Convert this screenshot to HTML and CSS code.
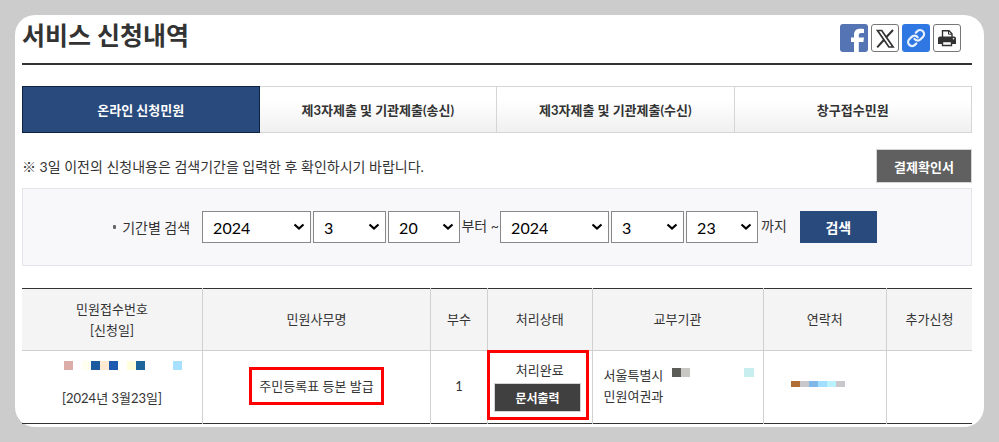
FILE: index.html
```html
<!DOCTYPE html>
<html lang="ko">
<head>
    <meta charset="UTF-8">
    <meta name="viewport" content="width=device-width, initial-scale=1.0">
    <title>서비스 신청내역</title>
    <link rel="stylesheet" href="styles.css">
</head>
<body>
    <main class="container">
        <header class="page-header">
            <h1>서비스 신청내역</h1>
            <div class="share">
                <a class="share-item facebook" href="#" aria-label="페이스북">
                    <svg viewBox="0 0 28 28" width="28" height="28"><path fill="#fff" d="M14 28V18h-3v-4.500h3v-2.500c0-4.300 2.300-6.300 6-6.300 1.500 0 3 .1 4 .3v4h-2.500c-2 0-2.700.7-2.700 2.200v2.300H24l-.6 4.500h-4.600v10z"/></svg>
                </a>
                <a class="share-item outlined" href="#" aria-label="X">
                    <svg viewBox="0 0 28 28" width="28" height="28"><path fill="none" stroke="#333" stroke-width="1.700" d="M6.500 6.500h4.200l11.400 16.500h-4.200z"/><path stroke="#333" stroke-width="2" d="M22 6l-7 7.500M12.800 16l-6.600 7.300"/></svg>
                </a>
                <a class="share-item link" href="#" aria-label="링크 복사">
                    <svg viewBox="0 0 28 28" width="28" height="28"><g transform="translate(4.500 4.500) scale(.8)" fill="none" stroke="#e8f2ff" stroke-width="2.800" stroke-linecap="round" stroke-linejoin="round"><path d="M10 13a5 5 0 0 0 7.540.540l3-3a5 5 0 0 0-7.070-7.070l-1.720 1.710"/><path d="M14 11a5 5 0 0 0-7.540-.540l-3 3a5 5 0 0 0 7.070 7.070l1.710-1.710"/></g></svg>
                </a>
                <button class="share-item outlined" type="button" aria-label="인쇄">
                    <svg viewBox="0 0 28 28" width="28" height="28"><path fill="#fff" stroke="#333" stroke-width="1.400" d="M9.500 14V6.700h6.500l3 3V14"/><path fill="none" stroke="#333" d="M15.500 6.700v3.500H19"/><path fill="#333" d="M7 12.500h14a2 2 0 0 1 2 2V20H5v-5.500a2 2 0 0 1 2-2z"/><path fill="#fff" stroke="#333" stroke-width="1.400" d="M9.500 17.500h9v4h-9z"/><circle cx="20.500" cy="14.700" r=".8" fill="#fff"/></svg>
                </button>
            </div>
        </header>

        <nav class="tabs">
            <a class="tab active" href="#">온라인 신청민원</a>
            <a class="tab" href="#">제3자제출 및 기관제출(송신)</a>
            <a class="tab" href="#">제3자제출 및 기관제출(수신)</a>
            <a class="tab" href="#">창구접수민원</a>
        </nav>

        <div class="notice">
            <p>※ 3일 이전의 신청내용은 검색기간을 입력한 후 확인하시기 바랍니다.</p>
            <button class="btn-receipt" type="button">결제확인서</button>
        </div>

        <form class="search">
            <label class="search-label" for="fromYear">기간별 검색</label>
            <div class="date-group">
                <select class="year" id="fromYear"><option>2024</option></select>
                <select id="fromMonth" aria-label="시작 월"><option>3</option></select>
                <select class="day" id="fromDay" aria-label="시작 일"><option>20</option></select>
            </div>
            <span class="from-text">부터 ~</span>
            <div class="date-group">
                <select class="year" id="toYear" aria-label="종료 연도"><option>2024</option></select>
                <select id="toMonth" aria-label="종료 월"><option>3</option></select>
                <select class="day" id="toDay" aria-label="종료 일"><option>23</option></select>
            </div>
            <span class="to-text">까지</span>
            <button class="btn-search" type="button">검색</button>
        </form>

        <table class="list">
            <colgroup>
                <col class="col-number">
                <col class="col-name">
                <col class="col-count">
                <col class="col-status">
                <col class="col-office">
                <col class="col-contact">
                <col class="col-extra">
            </colgroup>
            <thead>
                <tr>
                    <th>민원접수번호<br>[신청일]</th>
                    <th>민원사무명</th>
                    <th>부수</th>
                    <th>처리상태</th>
                    <th>교부기관</th>
                    <th>연락처</th>
                    <th>추가신청</th>
                </tr>
            </thead>
            <tbody>
                <tr>
                    <td class="number">
                        <svg class="mosaic" width="118" height="9" shape-rendering="crispEdges" aria-hidden="true">
                            <rect width="9" height="9" fill="#dbaca8"/>
                            <rect x="18" width="9" height="9" fill="#fffff0"/>
                            <rect x="27" width="9" height="9" fill="#1e5b9e"/>
                            <rect x="36" width="9" height="9" fill="#feebd2"/>
                            <rect x="45" width="9" height="9" fill="#1e5ab0"/>
                            <rect x="63" width="9" height="9" fill="#ffffdc"/>
                            <rect x="72" width="9" height="9" fill="#1e669a"/>
                            <rect x="109" width="9" height="9" fill="#a8e0ff"/>
                        </svg>
                        [2024년 3월23일]
                    </td>
                    <td><a class="doc-name" href="#">주민등록표 등본 발급</a></td>
                    <td>1</td>
                    <td class="status">
                        처리완료
                        <button class="btn-print" type="button">문서출력</button>
                    </td>
                    <td class="office">
                        <div class="office-name">
                            서울특별시
                            <svg class="mosaic" width="82" height="9" shape-rendering="crispEdges" aria-hidden="true">
                                <rect width="9" height="9" fill="#5b5c58"/>
                                <rect x="9" width="9" height="9" fill="#c9c7c4"/>
                                <rect x="72" width="10" height="9" fill="#c8eef0"/>
                            </svg>
                        </div>
                        민원여권과
                    </td>
                    <td>
                        <svg class="mosaic phone" width="54" height="6" shape-rendering="crispEdges" aria-hidden="true">
                            <rect width="9" height="6" fill="#b06d34"/>
                            <rect x="9" width="9" height="6" fill="#c9c7cb"/>
                            <rect x="18" width="9" height="6" fill="#82b8e8"/>
                            <rect x="27" width="9" height="6" fill="#a0dfff"/>
                            <rect x="36" width="9" height="6" fill="#baf2ff"/>
                            <rect x="45" width="9" height="6" fill="#c9c7cb"/>
                        </svg>
                    </td>
                    <td></td>
                </tr>
            </tbody>
        </table>
    </main>
</body>
</html>
```
FILE: styles.css
```css
* {
    box-sizing: border-box;
}
body {
    margin: 0;
    padding: 15px;
    background-color: #ccc;
    color: #333;
    font-family: Lato, 'Noto Sans CJK KR', sans-serif;
    font-size: 13px;
    line-height: 21px;
}
a {
    color: inherit;
    text-decoration: none;
}
button {
    font-family: inherit;
    font-weight: bold;
    color: #fff;
    padding: 0;
    cursor: pointer;
}
.container {
    background-color: #fff;
    border-radius: 20px;
    padding: 0 12px 3px 7px;
}
.page-header {
    display: flex;
    justify-content: space-between;
    align-items: flex-start;
    height: 50px;
    border-bottom: 2px solid #333;
}
h1 {
    margin: 0;
    font-size: 25px;
    line-height: 40px;
}
.share {
    display: flex;
    gap: 3px;
    padding: 9px 11px 0 0;
}
.share-item {
    display: flex;
    align-items: center;
    justify-content: center;
    width: 28px;
    height: 28px;
    border-radius: 3px;
    overflow: hidden;
}
.share-item svg {
    flex: none;
}
.facebook {
    background-color: #5474b4;
}
.link {
    background-color: #2f78e4;
}
.outlined {
    background-color: #fff;
    border: 1px solid #777;
}
.tabs {
    display: flex;
    margin-top: 21px;
}
.tab {
    width: 25%;
    height: 47px;
    border: 1px solid #d5d5d5;
    border-left: none;
    background: linear-gradient(#fff 30%, #f0f0f0);
    line-height: 46px;
    text-align: center;
    font-weight: bold;
}
.tab.active {
    background: #294a7d;
    border: 1px solid #0d2340;
    color: #fff;
}
.notice {
    display: flex;
    justify-content: space-between;
    align-items: center;
    margin-top: 16px;
    font-size: 14px;
}
.notice p {
    margin: 0;
}
.btn-receipt {
    width: 96px;
    height: 34px;
    background-color: #606060;
    border: 1px solid #d5d5d5;
    font-size: 13px;
}
.search {
    display: flex;
    justify-content: center;
    align-items: center;
    height: 78px;
    margin-top: 5px;
    padding-right: 4px;
    background-color: #f8f8fb;
    border: 1px solid #e5e5ec;
    font-size: 14px;
}
.search-label {
    display: flex;
    align-items: center;
    gap: 6px;
    margin-right: 12px;
}
.search-label::before {
    content: "";
    width: 3px;
    height: 4px;
    border-radius: 1px;
    background-color: #666;
}
.date-group {
    display: flex;
    gap: 2px;
}
select {
    appearance: none;
    width: 73px;
    height: 32px;
    padding: 1px 20px 0 10px;
    border: 1px solid #888;
    border-radius: 0;
    background: #fff url("data:image/svg+xml,%3Csvg xmlns='http://www.w3.org/2000/svg' width='12' height='8'%3E%3Cpath d='M1.500 1.500L6 5.500l4.500-4' fill='none' stroke='%23000' stroke-width='2.200'/%3E%3C/svg%3E") no-repeat right 5px center;
    color: #000;
    font-family: inherit;
    font-size: 16px;
}
select.year {
    width: 109px;
}
select.day {
    width: 72px;
}
.from-text {
    width: 40px;
    padding-bottom: 4px;
    text-align: center;
}
.to-text {
    padding: 0 13px 4px 3px;
}
.btn-search {
    width: 77px;
    height: 32px;
    background-color: #294a7d;
    border: none;
    font-size: 14px;
}
.list {
    width: 100%;
    margin-top: 22px;
    border-collapse: collapse;
    table-layout: fixed;
    border-top: 1px solid #333;
    border-bottom: 1px solid #333;
    text-align: center;
}
.col-number {
    width: 19%;
}
.col-name {
    width: 24%;
}
.col-count {
    width: 6%;
}
.col-status {
    width: 11%;
}
.col-office {
    width: 18%;
}
.col-contact {
    width: 13%;
}
.col-extra {
    width: 9%;
}
.list th,
.list td {
    padding: 0;
    border-left: 1px solid #d0d0d0;
}
.list th:first-child,
.list td:first-child {
    border-left: none;
}
.list th {
    height: 62px;
    background-color: #f4f4f4;
    border-bottom: 1px solid #d0d0d0;
    font-weight: normal;
}
.list td {
    height: 73px;
    padding-bottom: 2px;
}
.mosaic {
    display: block;
}
.list .number {
    padding-bottom: 5px;
}
.number .mosaic {
    margin: 0 auto 18px 42px;
}
.doc-name {
    display: inline-block;
    padding: 6px 7px 5px;
    border: 3px solid #f00;
}
.list .status {
    position: relative;
}
/* highlight frame over the cell borders */
.status::after {
    content: "";
    position: absolute;
    inset: -1px 3px 3px -1px;
    border: 3px solid #f00;
    pointer-events: none;
}
.btn-print {
    display: block;
    width: 87px;
    height: 29px;
    margin: 2px 0 0 6px;
    background-color: #404040;
    border: 1px solid #d5d5d5;
    font-size: 12px;
}
.list .office {
    padding-left: 11px;
    text-align: left;
}
.office-name {
    display: flex;
    gap: 9px;
}
.office-name .mosaic {
    margin-top: 3px;
}
.list .phone {
    margin: 0 auto 4px 27px;
}
```
